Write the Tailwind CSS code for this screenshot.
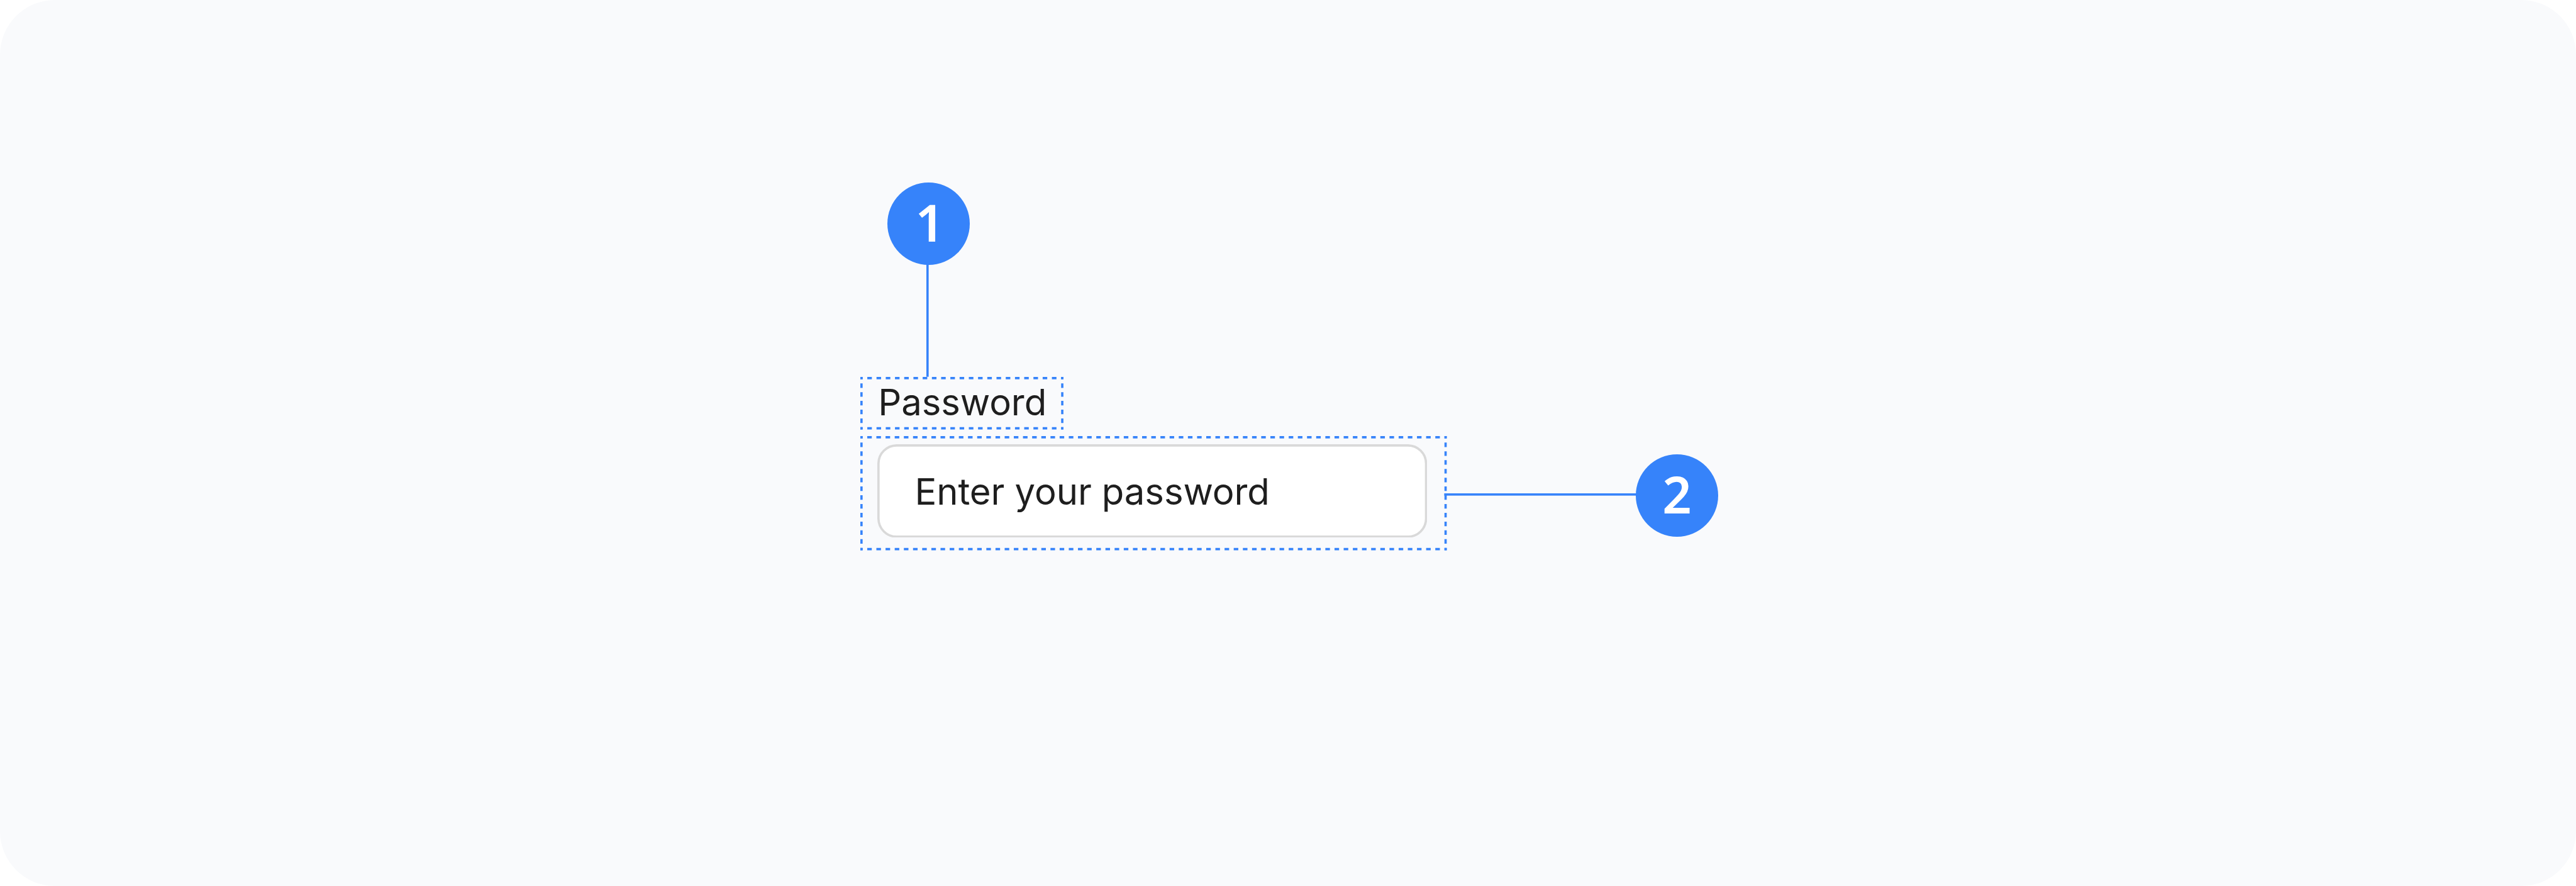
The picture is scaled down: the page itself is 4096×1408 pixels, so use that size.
<!DOCTYPE html>
<html lang="en">
<head>
<meta charset="utf-8">
<title>Password field anatomy</title>
<script src="https://cdn.jsdelivr.net/npm/@tailwindcss/browser@4"></script>
</head>
<body class="bg-white">
<main class="flex h-[1408px] w-[4096px] flex-col items-start overflow-hidden rounded-[87px] bg-[#f9fafc] pt-[290.25px] pl-[1367.75px] font-['Inter',sans-serif] text-[58.05px] text-[#1e1e1e]">

  <!-- Marker 1 and its connector -->
  <div class="ml-[43.55px] flex size-[130.6px] shrink-0 justify-center rounded-full bg-[#3683fa] pl-[4px] font-['Noto_Sans',sans-serif] text-[81.3px] leading-[125.5px] font-semibold text-white">1</div>
  <svg class="ml-[105.2px] h-[177.75px] w-[3.65px] shrink-0 overflow-visible" fill="#3683fa"><rect y="-2" width="3.63" height="179.75"/></svg>

  <!-- Label -->
  <div class="relative h-[83.45px] w-[322.9px] shrink-0 pl-[28.5px] leading-[81px] tracking-[-0.1px] whitespace-nowrap">
    Password
    <svg class="absolute top-0 left-0 h-[83.45px] w-[322.9px] overflow-visible" fill="none" stroke="#3683fa" stroke-width="3.63">
      <path d="M0 1.81H322.9M0 81.63H322.9" stroke-dasharray="7.26 7.417" stroke-dashoffset="3.63"/>
      <path d="M1.81 0V83.45M321.08 0V83.45" stroke-dasharray="7.26 6.648" stroke-dashoffset="3.63"/>
    </svg>
  </div>

  <!-- Input, connector and marker 2 -->
  <div class="mt-[10.9px] flex shrink-0 items-start">
    <div class="relative h-[181.4px] w-[932.4px] px-[27.2px] pt-[12.7px]">
      <div class="relative h-[148.75px] w-[874.35px] pl-[59.6px] leading-[150.2px] tracking-[-0.1px] whitespace-nowrap">
        <svg class="absolute top-0 left-0 h-[148.75px] w-[874.35px]"><rect x="1.81" y="1.81" width="870.72" height="145.12" rx="29" fill="#fff" stroke="#d9d9d9" stroke-width="3.63"/></svg>
        <span class="relative">Enter your password</span>
      </div>
      <svg class="absolute top-0 left-0 h-[181.4px] w-[932.4px] overflow-visible" fill="none" stroke="#3683fa" stroke-width="3.63">
        <path d="M0 1.81H932.4M0 179.58H932.4" stroke-dasharray="7.26 7.309" stroke-dashoffset="3.63"/>
        <path d="M1.81 0V181.4M930.58 0V181.4" stroke-dasharray="7.26 6.694" stroke-dashoffset="3.63"/>
      </svg>
    </div>
    <svg class="mt-[90.7px] h-[3.65px] w-[301.1px] overflow-visible" fill="#3683fa"><rect x="-3.63" width="306.7" height="3.63"/></svg>
    <div class="mt-[29px] flex size-[130.6px] justify-center rounded-full bg-[#3683fa] font-['Noto_Sans',sans-serif] text-[81.3px] leading-[125.5px] font-semibold text-white">2</div>
  </div>
</main>
</body>
</html>
